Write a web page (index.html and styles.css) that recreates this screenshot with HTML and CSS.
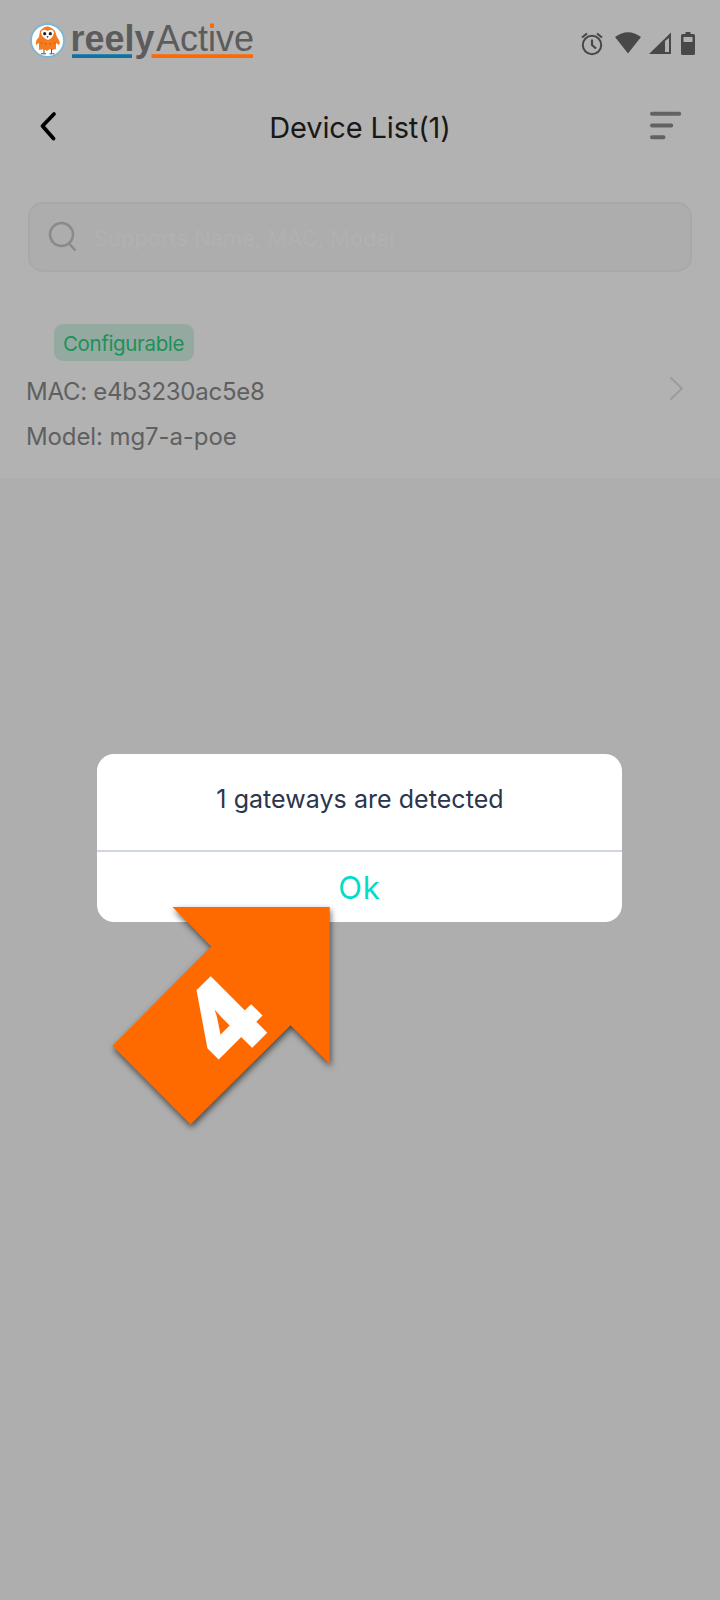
FILE: index.html
```html
<!DOCTYPE html>
<html lang="en">
<head>
<meta charset="utf-8">
<title>Device List</title>
<link rel="stylesheet" href="styles.css">
</head>
<body>
<div class="screen">
  <div class="sheet">
    <header class="status">
      <svg class="logo" width="226" height="58" viewBox="30 10 226 58">
        <circle cx="47.5" cy="40.5" r="16.4" fill="#fff" stroke="#79b5d5" stroke-width="1.6"/>
        <path d="M40 31Q47 22 55 31L57 37Q61 42 59 45L56 43V49L52 50L50 49L47 51L44 49L39 50V43L36 45Q35 41 39 37Z" fill="#f47b20"/>
        <path d="M41 32Q43 28 47.500 31Q52 28 54 32Q54 37 48 40Q41 37 41 32Z" fill="#fff"/>
        <circle cx="44.7" cy="33.7" r="1.600" fill="#222"/><circle cx="50.3" cy="33.7" r="1.600" fill="#222"/>
        <path d="M46.6 36h2l-1 2.600z" fill="#555"/>
        <path d="M44 49v4.500M51.500 49v4.500M41 53.800h5M49.500 53.800h5" stroke="#555" stroke-width="1" fill="none"/>
        <path d="M41 42l1 2M45 43l1 2M50 43l1 2M54 42l1 2" stroke="#cf5b08" fill="none"/>
        <text class="logo-bold" x="70.500" y="50.7" textLength="84" lengthAdjust="spacingAndGlyphs">reely</text>
        <text class="logo-light" x="156" y="50.7" textLength="98" lengthAdjust="spacingAndGlyphs">Active</text>
        <path d="M210 23.500h4v4.300h-4z" fill="#ff6a00"/>
        <path d="M72 54.3h60v3.8H72z" fill="#0c72a8"/>
        <path d="M151.5 54.3H253v3.8H151.5z" fill="#ff6a00"/>
      </svg>
      <svg class="signals" width="118" height="26" viewBox="580 31 118 26">
        <g fill="none" stroke="#484848" stroke-width="2"><circle cx="592" cy="45" r="9.2"/><path d="M592 39.5V45l4 3.5M582 37.5l5-4M602 37.5l-5-4" stroke-width="2.2"/></g>
        <path d="M615 37Q628 27.500 641 37L628 53.500Z" fill="#484848"/>
        <path d="M649 54L671 32.500V54Z" fill="#484848"/>
        <path d="M665 41l4-3v14h-4z" fill="#b2b2b2"/>
        <path d="M685.500 32h5v2h3q1.500 0 1.500 1.500v18q0 1.500-1.500 1.500h-11q-1.500 0-1.500-1.500v-18q0-1.500 1.500-1.500h3z" fill="#484848"/>
        <path d="M683.500 37h9v5h-9z" fill="#b2b2b2"/>
      </svg>
    </header>
    <nav class="nav">
      <svg width="24" height="34" viewBox="36 110 24 34"><path d="M54 114L42.500 126L53.500 138.500" fill="none" stroke="#000" stroke-width="3.800" stroke-linecap="round" stroke-linejoin="round"/></svg>
      <h1 class="title">Device List(1)</h1>
      <svg width="34" height="32" viewBox="648 111 34 32"><path d="M652 113.700h27.200M652 125.500h19.200M652 137.200h11.500" stroke="#626262" stroke-width="4" stroke-linecap="round"/></svg>
    </nav>
    <div class="search">
      <svg width="30" height="32" viewBox="48 221 30 32"><g fill="none" stroke="#8a8a8a" stroke-width="2.500"><circle cx="61.500" cy="234.500" r="11.500"/><path d="M69 243.500l6.500 7"/></g></svg>
      <span class="placeholder">Supports Name, MAC, Model</span>
    </div>
    <section class="device">
      <div class="info">
        <span class="badge"><span class="badge-text">Configurable</span></span>
        <p class="line mac">MAC: e4b3230ac5e8</p>
        <p class="line model">Model: mg7-a-poe</p>
      </div>
      <svg class="chevron" width="16" height="26" viewBox="669 376 16 26"><path d="M670.500 377.500L682 388.500L670.500 399.500" fill="none" stroke="#9a9a9a" stroke-width="1.800"/></svg>
    </section>
  </div>
  <div class="dialog">
    <p class="message">1 gateways are detected</p>
    <div class="ok">Ok</div>
  </div>
  <svg class="arrow" width="260" height="260" viewBox="90 890 260 260">
    <path class="arrow-shape" d="M172.500 907H329.700V1064L290.500 1025.300L190.500 1124.500L112.500 1046L211.200 946.500Z"/>
    <text class="step" transform="translate(251.500 1048.600) rotate(-45)">4</text>
  </svg>
</div>
</body>
</html>
```
FILE: styles.css
```css
* { box-sizing: border-box; }
body { margin: 0; background: #aeaeae; font-family: Inter, "Noto Sans", sans-serif; }
h1, p { margin: 0; font-weight: 400; white-space: nowrap; }
svg { display: block; flex: none; overflow: visible; }
.screen { position: relative; width: 720px; height: 1600px; overflow: hidden; background: #aeaeae; }
.sheet { height: 478px; background: #b2b2b2; }
.status { height: 88px; padding: 10px 22px 0 30px; display: flex; justify-content: space-between; }
.signals { margin-top: 21px; }
.logo text { font-family: "Liberation Sans", Arial, sans-serif; font-size: 37px; fill: #5c5c5c; }
.logo .logo-bold { font-weight: 700; }
.nav { height: 78px; padding: 0 38px 0 36px; display: grid; grid-template-columns: 34px 1fr 34px; align-items: center; }
.title { font-size: 29px; line-height: 40px; color: #181818; letter-spacing: -0.15px; text-align: center; padding: 1px 0 0 2px; }
.search { margin: 36px 28px 0; height: 70px; padding: 0 18px; border: 2px solid #a8a8a8; border-radius: 15px; background: #adadad; display: flex; align-items: center; gap: 16px; }
.placeholder { font-size: 22px; letter-spacing: -0.05px; color: #b1b1b1; padding-top: 1px; white-space: nowrap; }
.device { margin-top: 52px; padding: 0 35px 0 26px; display: flex; align-items: center; justify-content: space-between; }
.chevron { margin-bottom: 5px; }
.badge { display: flex; align-items: center; justify-content: center; margin-left: 28px; width: 140px; height: 37px; border-radius: 9px; background: #94aaa0; }
.badge-text { font-size: 20.500px; letter-spacing: -0.35px; color: #1c9158; white-space: nowrap; padding: 2px 1px 0 0; }
.line { font-size: 24px; line-height: 45px; color: #606060; }
.mac { margin-top: 8px; letter-spacing: -0.25px; }
.model { letter-spacing: -0.1px; }
.dialog { position: absolute; left: 97px; top: 754px; width: 525px; height: 168px; border-radius: 17px; background: #fff; text-align: center; }
.message { height: 98px; border-bottom: 2px solid #d0d5e3; line-height: 90px; font-size: 25px; letter-spacing: 0.05px; padding-left: 1px; color: #2b354e; }
.ok { height: 70px; line-height: 71px; font-size: 31px; letter-spacing: 0.8px; color: #00dec8; }
.arrow { position: absolute; left: 90px; top: 890px; }
.arrow-shape { fill: #ff6a00; filter: drop-shadow(1px 3px 3px rgba(0, 0, 0, 0.6)); }
.step { font-family: "Open Sans", sans-serif; font-weight: 800; font-size: 112px; fill: #fff; text-anchor: middle; }
```
